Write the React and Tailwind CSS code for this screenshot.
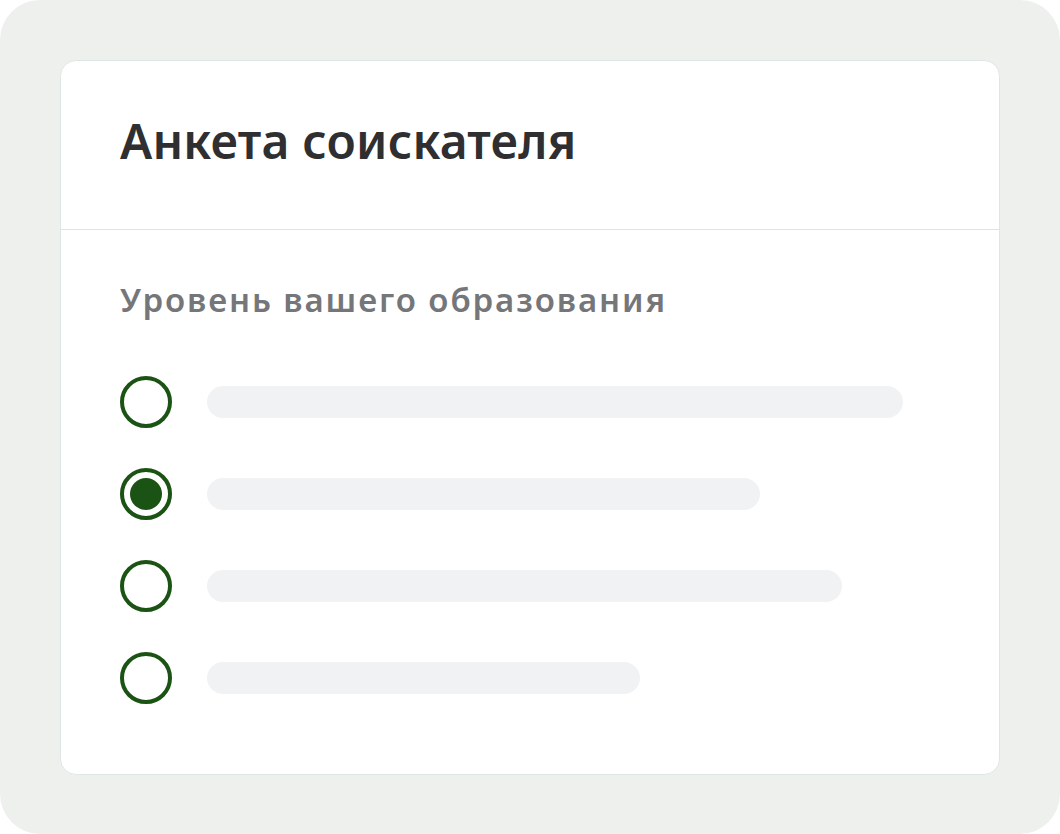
import React from 'react';

const options = [
  { width: 696, checked: false },
  { width: 553, checked: true },
  { width: 635, checked: false },
  { width: 433, checked: false },
];

function Radio({ checked }) {
  return (
    <span className="flex h-[52px] w-[52px] shrink-0 items-center justify-center rounded-full border-4 border-[#1b5314] bg-white">
      {checked && <span className="block h-[32px] w-[32px] rounded-full bg-[#1b5314]" />}
    </span>
  );
}

export default function App() {
  return (
    <div className="bg-white">
      <div className="h-[834px] w-[1060px] rounded-[40px] bg-[#eef0ee] p-[60px] font-['Noto_Sans','Open_Sans',sans-serif]">
        <div className="rounded-2xl border border-[#dfe7e4] bg-white">
          <div className="border-b border-[#d9e6e2] px-[59px] pt-[52px] pb-[60px]">
            <h1 className="text-[48px] leading-[56px] font-semibold tracking-[0.2px] text-[#2f2f31]">Анкета соискателя</h1>
          </div>
          <div className="px-[59px] pt-[50px] pb-[70px]">
            <p className="text-[33px] leading-[40px] font-semibold tracking-[1.9px] text-[#75767a]">Уровень вашего образования</p>
            <ul className="mt-[56px] flex flex-col gap-[40px]">
              {options.map((o, i) => (
                <li key={i} className="flex items-center gap-[35px]">
                  <Radio checked={o.checked} />
                  <span className="block h-[32px] rounded-full bg-[#f1f2f4]" style={{ width: o.width }} />
                </li>
              ))}
            </ul>
          </div>
        </div>
      </div>
    </div>
  );
}
